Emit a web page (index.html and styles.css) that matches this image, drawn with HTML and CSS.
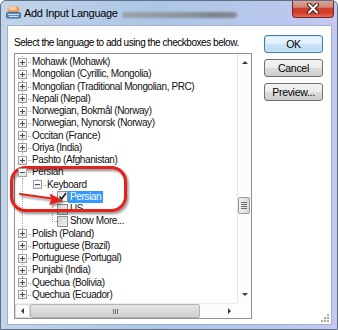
FILE: index.html
```html
<!DOCTYPE html>
<html>
<head>
<meta charset="utf-8">
<link rel="stylesheet" href="styles.css">
</head>
<body>
<div class="window">
  <div class="titlebar">
    <svg class="app-icon" width="15" height="14" viewBox="0 0 15 14">
      <ellipse cx="7.5" cy="4.5" rx="6" ry="3.8" fill="#e59a5c"/>
      <ellipse cx="6.5" cy="3.3" rx="4" ry="2" fill="#f7cfa3"/>
      <rect x="0.5" y="7.5" width="14" height="5.5" rx="1" fill="#5d8cc0" stroke="#3f6a9a"/>
      <rect x="2" y="9" width="11" height="1" fill="#cfe2f5"/>
      <rect x="3" y="11" width="9" height="1" fill="#cfe2f5"/>
    </svg>
    <span class="title">Add Input Language</span>
    <span class="smudge"></span>
    <div class="close">
      <svg width="14" height="11" viewBox="0 0 14 11">
        <path d="M3 1.5 L11 9.5 M11 1.5 L3 9.5" stroke="#4a1c16" stroke-width="4" stroke-linecap="round"/>
        <path d="M3 1.5 L11 9.5 M11 1.5 L3 9.5" stroke="#ffffff" stroke-width="2" stroke-linecap="round"/>
      </svg>
    </div>
  </div>
  <div class="frame">
    <div class="client">
      <div class="main">
        <div class="label">Select the language to add using the checkboxes below.</div>
        <div class="listbox">
          <div class="view">
            <div class="tree">
              <div class="row"><span class="c t"><span class="box plus"></span></span><span class="txt">Mohawk (Mohawk)</span></div>
              <div class="row"><span class="c t"><span class="box plus"></span></span><span class="txt">Mongolian (Cyrillic, Mongolia)</span></div>
              <div class="row"><span class="c t"><span class="box plus"></span></span><span class="txt">Mongolian (Traditional Mongolian, PRC)</span></div>
              <div class="row"><span class="c t"><span class="box plus"></span></span><span class="txt">Nepali (Nepal)</span></div>
              <div class="row"><span class="c t"><span class="box plus"></span></span><span class="txt">Norwegian, Bokmål (Norway)</span></div>
              <div class="row"><span class="c t"><span class="box plus"></span></span><span class="txt">Norwegian, Nynorsk (Norway)</span></div>
              <div class="row"><span class="c t"><span class="box plus"></span></span><span class="txt">Occitan (France)</span></div>
              <div class="row"><span class="c t"><span class="box plus"></span></span><span class="txt">Oriya (India)</span></div>
              <div class="row"><span class="c t"><span class="box plus"></span></span><span class="txt">Pashto (Afghanistan)</span></div>
              <div class="row"><span class="c t"><span class="box minus"></span></span><span class="txt">Persian</span></div>
              <div class="row"><span class="c i"></span><span class="c l"><span class="box minus"></span></span><span class="txt">Keyboard</span></div>
              <div class="row"><span class="c i"></span><span class="c"></span><span class="c c3 t"></span><span class="chk checked"><svg width="9" height="9" viewBox="0 0 9 9"><path d="M1.5 4.5 L3.6 7 L8 1" fill="none" stroke="#1b1b1b" stroke-width="1.6"/></svg></span><span class="txt sel">Persian</span></div>
              <div class="row"><span class="c i"></span><span class="c"></span><span class="c c3 t"></span><span class="chk"></span><span class="txt">US</span></div>
              <div class="row"><span class="c i"></span><span class="c"></span><span class="c c3 l"></span><span class="chk"></span><span class="txt">Show More...</span></div>
              <div class="row"><span class="c t"><span class="box plus"></span></span><span class="txt">Polish (Poland)</span></div>
              <div class="row"><span class="c t"><span class="box plus"></span></span><span class="txt">Portuguese (Brazil)</span></div>
              <div class="row"><span class="c t"><span class="box plus"></span></span><span class="txt">Portuguese (Portugal)</span></div>
              <div class="row"><span class="c t"><span class="box plus"></span></span><span class="txt">Punjabi (India)</span></div>
              <div class="row"><span class="c t"><span class="box plus"></span></span><span class="txt">Quechua (Bolivia)</span></div>
              <div class="row"><span class="c t"><span class="box plus"></span></span><span class="txt">Quechua (Ecuador)</span></div>
            </div>
            <div class="vscroll">
              <div class="vbtn"><span class="arr-up"></span></div>
              <div class="vtrack"><div class="vthumb"><i></i><i></i><i></i><i></i></div></div>
              <div class="vbtn"><span class="arr-down"></span></div>
            </div>
          </div>
          <div class="hbar">
            <div class="hscroll">
              <div class="hbtn first"><span class="arr-left"></span></div>
              <div class="hthumb"><i></i><i></i><i></i></div>
              <div class="htrack"></div>
              <div class="hbtn"><span class="arr-right"></span></div>
            </div>
            <div class="corner"></div>
          </div>
        </div>
      </div>
      <div class="side">
        <button class="btn default">OK</button>
        <button class="btn">Cancel</button>
        <button class="btn">Preview...</button>
        <svg class="grip" width="10" height="10" viewBox="0 0 10 10">
          <g fill="#a7a7a7">
            <rect x="7" y="1" width="2" height="2"/>
            <rect x="4" y="4" width="2" height="2"/><rect x="7" y="4" width="2" height="2"/>
            <rect x="1" y="7" width="2" height="2"/><rect x="4" y="7" width="2" height="2"/><rect x="7" y="7" width="2" height="2"/>
          </g>
        </svg>
      </div>
    </div>
  </div>
  <svg class="annot" width="338" height="330" viewBox="0 0 338 330">
    <defs>
      <filter id="sh" x="-10%" y="-20%" width="130%" height="160%">
        <feDropShadow dx="1.5" dy="2" stdDeviation="1.2" flood-color="#000" flood-opacity="0.45"/>
      </filter>
    </defs>
    <g filter="url(#sh)">
      <rect x="11.5" y="167.5" width="114" height="43" rx="14" fill="none" stroke="#e3201b" stroke-width="3"/>
      <path d="M20 194 L52 198.5" stroke="#e3201b" stroke-width="2" stroke-linecap="round"/>
      <path d="M63 200.5 L49.5 193.5 L51.5 199 L49 205 Z" fill="#e3201b"/>
    </g>
  </svg>
</div>
</body>
</html>
```
FILE: styles.css
```css
* { box-sizing: border-box; }
html, body { margin: 0; padding: 0; background: #ffffff; }
body { font-family: "Liberation Sans", Arial, sans-serif; }

.window {
  position: relative;
  width: 338px;
  height: 330px;
  border: 1px solid #5f6f84;
  border-radius: 6px 6px 0 0;
  background: linear-gradient(to right, #c3d4ea 0%, #acc6e6 45%, #b6c7ec 75%, #c6c8f0 100%);
  display: flex;
  flex-direction: column;
  overflow: hidden;
}

.titlebar {
  height: 24px;
  flex: none;
  display: flex;
  align-items: flex-start;
}
.app-icon { margin: 4px 3px 0 5px; flex: none; }
.title {
  margin-top: 5px;
  font-size: 11px;
  letter-spacing: -0.3px;
  line-height: 14px;
  color: #000;
}
.smudge {
  margin: 11px 0 0 4px;
  width: 115px;
  height: 6px;
  border-radius: 3px;
  background: linear-gradient(to right, #9ba1ab 0%, #8e949e 55%, #7b818b 80%, #868c96 100%);
  filter: blur(1px);
}
.close {
  margin: -1px 3px 0 auto;
  width: 42px;
  height: 18px;
  border: 1px solid #6a2c24;
  border-top: none;
  border-radius: 0 0 4px 4px;
  background: linear-gradient(#dca89e 0%, #cf8576 42%, #c8402f 50%, #d63b29 75%, #e46a52 100%);
  display: flex;
  align-items: center;
  justify-content: center;
}

.frame {
  flex: 1;
  padding: 0 5px 4px 6px;
  display: flex;
}
.client {
  width: 325px;
  height: 300px;
  border: 1px solid #9eb2cc;
  background: #ffffff;
  display: flex;
}

.main {
  width: 244px;
  padding-left: 6px;
  display: flex;
  flex-direction: column;
}
.label {
  padding-top: 10px;
  margin-bottom: 4px;
  font-size: 10px;
  line-height: 13px;
  letter-spacing: -0.45px;
  white-space: nowrap;
  color: #000;
}

.listbox {
  width: 238px;
  height: 266px;
  border: 1px solid #8e9198;
  background: #fff;
  display: flex;
  flex-direction: column;
}
.view {
  height: 249px;
  display: flex;
}
.tree {
  flex: 1;
  overflow: hidden;
  padding-top: 2px;
}
.row {
  height: 12.25px;
  display: flex;
  align-items: center;
  white-space: nowrap;
}
.c {
  position: relative;
  width: 15px;
  height: 100%;
  flex: none;
  display: flex;
  align-items: center;
  padding-left: 3px;
}
.c.c3 { width: 12px; }
.c.t::before, .c.i::before, .c.l::before {
  content: "";
  position: absolute;
  left: 7px;
  top: 0;
  bottom: 0;
  width: 1px;
  background: repeating-linear-gradient(to bottom, #a3a3a3 0 1px, transparent 1px 2px);
}
.c.l::before { bottom: auto; height: 6px; }
.c.t::after, .c.l::after {
  content: "";
  position: absolute;
  left: 7px;
  right: -1px;
  top: 6px;
  height: 1px;
  background: repeating-linear-gradient(to right, #a3a3a3 0 1px, transparent 1px 2px);
}
.box {
  position: relative;
  z-index: 1;
  width: 9px;
  height: 9px;
  border: 1px solid #a0a0a0;
  background: linear-gradient(#ffffff, #e4e4e4);
  display: flex;
  align-items: center;
  justify-content: center;
}
.box::before {
  content: "";
  width: 5px;
  height: 1px;
  background: #4b4b4b;
}
.box.plus::after {
  content: "";
  position: absolute;
  left: 3px;
  top: 1px;
  width: 1px;
  height: 5px;
  background: #4b4b4b;
}
.chk {
  width: 11px;
  height: 11px;
  flex: none;
  border: 1px solid #8e8f8f;
  background: linear-gradient(135deg, #cfcfcf, #f1f1f1);
  display: flex;
  align-items: center;
  justify-content: center;
}
.chk.checked { background: linear-gradient(135deg, #e2e2e2, #fbfbfb); }
.txt {
  margin-left: 2px;
  font-size: 10px;
  letter-spacing: -0.4px;
  line-height: 12px;
  color: #111;
}
.txt.sel {
  margin-left: 0;
  padding: 0 2px;
  background: #3399ff;
  color: #fff;
}

.vscroll {
  width: 14px;
  flex: none;
  border-left: 1px solid #e6e6e6;
  background: #fcfcfc;
  display: flex;
  flex-direction: column;
}
.vbtn {
  height: 17px;
  display: flex;
  align-items: center;
  justify-content: center;
}
.vtrack { flex: 1; }
.vthumb {
  margin-top: 126px;
  width: 12px;
  height: 17px;
  border: 1px solid #9a9a9a;
  border-radius: 2px;
  background: linear-gradient(to right, #f2f2f2, #d9d9d9);
  display: flex;
  flex-direction: column;
  align-items: center;
  justify-content: center;
  gap: 1px;
}
.vthumb i { display: block; width: 6px; height: 1px; background: #6d6d6d; }
.arr-up { width: 0; height: 0; border-left: 3px solid transparent; border-right: 3px solid transparent; border-bottom: 3px solid #3a3a3a; }
.arr-down { width: 0; height: 0; border-left: 3px solid transparent; border-right: 3px solid transparent; border-top: 3px solid #3a3a3a; }
.arr-left { width: 0; height: 0; border-top: 3px solid transparent; border-bottom: 3px solid transparent; border-right: 3px solid #3a3a3a; }
.arr-right { width: 0; height: 0; border-top: 3px solid transparent; border-bottom: 3px solid transparent; border-left: 3px solid #3a3a3a; }

.hbar {
  flex: 1;
  display: flex;
}
.hscroll {
  flex: 1;
  display: flex;
  background: #fcfcfc;
  border-top: 1px solid #ececec;
}
.hbtn {
  width: 15px;
  display: flex;
  align-items: center;
  justify-content: center;
}
.hbtn.first { border: 1px solid #d8d8d8; background: #fafafa; }
.hthumb {
  width: 170px;
  border: 1px solid #b4b4b4;
  border-radius: 2px;
  background: linear-gradient(#e6e6e6, #cfcfcf);
  display: flex;
  align-items: center;
  justify-content: center;
  gap: 1px;
}
.hthumb i { display: block; width: 1px; height: 5px; background: #6d6d6d; }
.htrack { flex: 1; }
.corner { width: 14px; background: #fdfdfd; }

.side {
  flex: 1;
  display: flex;
  flex-direction: column;
  padding-top: 9px;
  gap: 6px;
}
.btn {
  margin-left: 12px;
  width: 59px;
  height: 18px;
  padding: 0;
  border: 1px solid #707070;
  border-radius: 3px;
  background: linear-gradient(#f3f3f3 0%, #ebebeb 50%, #dcdcdc 50%, #cfcfcf 100%);
  font-family: "Liberation Sans", Arial, sans-serif;
  font-size: 10.5px;
  letter-spacing: -0.3px;
  color: #000;
}
.btn.default {
  border-color: #3c7fb1;
  background: linear-gradient(#edf5fd 0%, #dfeefc 50%, #cde4f9 50%, #bcd9f3 100%);
  box-shadow: inset 0 0 0 1px #c5e6fb;
}
.grip {
  margin-top: auto;
  align-self: flex-end;
  margin-right: 1px;
  margin-bottom: 1px;
}

.annot {
  position: absolute;
  left: -1px;
  top: -1px;
  pointer-events: none;
}
```
